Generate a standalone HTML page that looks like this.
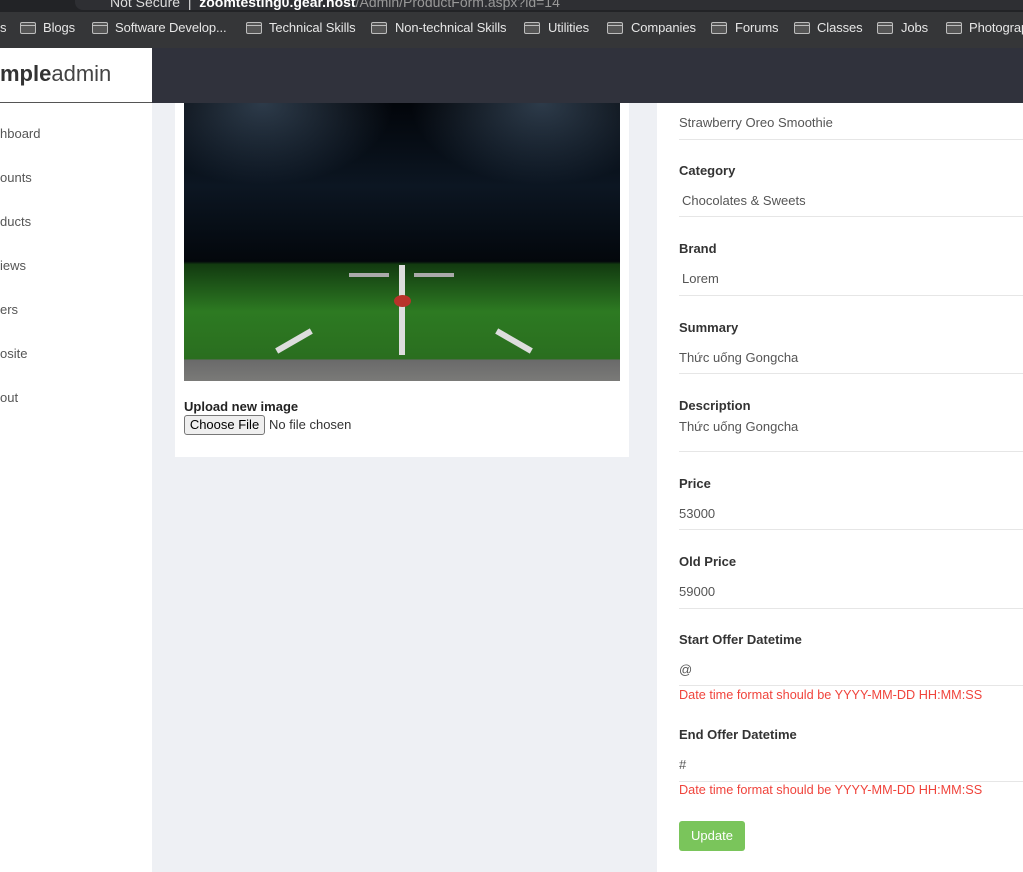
<!DOCTYPE html>
<html><head><meta charset="utf-8"><style>
*{margin:0;padding:0;box-sizing:border-box}
body{width:1023px;height:872px;overflow:hidden;position:relative;background:#eef0f4;font-family:"Liberation Sans",sans-serif}
.a{position:absolute;white-space:nowrap}
.bm{position:absolute;top:20px;font-size:13px;color:#e6e6e6;letter-spacing:-0.1px}
.fd{position:absolute;top:22px;width:16px;height:12px;border:1.5px solid #bdbdbd;border-radius:2px;background:#555}
.fd:after{content:"";position:absolute;left:-1px;right:-1px;top:2px;border-top:1.5px solid #bdbdbd}
.nav{position:absolute;left:0;font-size:13px;color:#555}
.lb{position:absolute;left:679px;font-size:13px;font-weight:bold;color:#333}
.v{position:absolute;left:679px;font-size:13px;color:#555}
.ln{position:absolute;left:679px;right:0;height:1px;background:#e6e6e6}
.er{position:absolute;left:679px;font-size:12.7px;color:#f0443c}
</style></head><body>
<div class="a" style="left:0;top:0;width:1023px;height:12px;background:#222326"></div>
<div class="a" style="left:75px;top:0;width:948px;height:10px;background:#2e2f33;border-radius:0 0 0 8px"></div>
<div class="a" style="left:110px;top:-6px;font-size:14px;color:#ddd">Not Secure &nbsp;|&nbsp; <b style="color:#fff">zoomtesting0.gear.host</b><span style="color:#999">/Admin/ProductForm.aspx?id=14</span></div>
<div class="a" style="left:0;top:12px;width:1023px;height:36px;background:#353638"></div>
<div class="bm" style="left:0">s</div>
<div class="fd" style="left:20px"></div><div class="bm" style="left:43px">Blogs</div>
<div class="fd" style="left:92px"></div><div class="bm" style="left:115px">Software Develop...</div>
<div class="fd" style="left:246px"></div><div class="bm" style="left:269px">Technical Skills</div>
<div class="fd" style="left:371px"></div><div class="bm" style="left:395px">Non-technical Skills</div>
<div class="fd" style="left:524px"></div><div class="bm" style="left:548px">Utilities</div>
<div class="fd" style="left:607px"></div><div class="bm" style="left:631px">Companies</div>
<div class="fd" style="left:711px"></div><div class="bm" style="left:735px">Forums</div>
<div class="fd" style="left:794px"></div><div class="bm" style="left:817px">Classes</div>
<div class="fd" style="left:877px"></div><div class="bm" style="left:901px">Jobs</div>
<div class="fd" style="left:946px"></div><div class="bm" style="left:969px">Photograp</div>
<div class="a" style="left:0;top:48px;width:1023px;height:55px;background:#30323c"></div>
<div class="a" style="left:0;top:48px;width:152px;height:55px;background:#fff;border-bottom:1px solid #555"></div>
<div class="a" style="left:0;top:61px;font-size:22px;color:#333"><b>mple</b><span style="font-weight:300;color:#444">admin</span></div>
<div class="a" style="left:0;top:103px;width:152px;height:769px;background:#fff"></div>
<div class="nav" style="top:126px">hboard</div>
<div class="nav" style="top:170px">ounts</div>
<div class="nav" style="top:214px">ducts</div>
<div class="nav" style="top:258px">iews</div>
<div class="nav" style="top:302px">ers</div>
<div class="nav" style="top:346px">osite</div>
<div class="nav" style="top:390px">out</div>
<div class="a" style="left:175px;top:103px;width:454px;height:354px;background:#fff"></div>
<div class="a" style="left:184px;top:103px;width:436px;height:278px;overflow:hidden;background:linear-gradient(#02050a 0%,#0c1622 30%,#03070c 57%,#123a10 58%,#2d7a22 75%,#2a6e1f 92%,#6a6a6a 92.5%,#7a7a78 100%)">
<div class="a" style="left:0;top:0;width:436px;height:150px;background:radial-gradient(ellipse 30% 55% at 18% 0%,rgba(110,140,170,.4),transparent),radial-gradient(ellipse 30% 55% at 82% 0%,rgba(110,140,170,.4),transparent)"></div>
<div class="a" style="left:215px;top:162px;width:6px;height:90px;background:#ddd"></div>
<div class="a" style="left:210px;top:192px;width:17px;height:12px;border-radius:50%;background:#b8332a"></div>
<div class="a" style="left:165px;top:170px;width:40px;height:4px;background:#aaa"></div>
<div class="a" style="left:230px;top:170px;width:40px;height:4px;background:#aaa"></div>
<div class="a" style="left:90px;top:235px;width:40px;height:6px;background:#ddd;transform:rotate(-30deg)"></div>
<div class="a" style="left:310px;top:235px;width:40px;height:6px;background:#ddd;transform:rotate(30deg)"></div>
</div>
<div class="a" style="left:184px;top:399px;font-size:13px;font-weight:bold;color:#222">Upload new image</div>
<div class="a" style="left:184px;top:415px;width:81px;height:20px;border:1px solid #777;border-radius:3px;background:#efefef;font-size:13px;text-align:center;line-height:18px;color:#000">Choose File</div>
<div class="a" style="left:269px;top:417px;font-size:13px;color:#333">No file chosen</div>
<div class="a" style="left:657px;top:103px;width:366px;height:769px;background:#fff"></div>
<div class="v" style="top:115px">Strawberry Oreo Smoothie</div><div class="ln" style="top:139px"></div>
<div class="lb" style="top:163px">Category</div>
<div class="v" style="top:193px;left:682px">Chocolates &amp; Sweets</div><div class="ln" style="top:216px"></div>
<div class="lb" style="top:241px">Brand</div>
<div class="v" style="top:271px;left:682px">Lorem</div><div class="ln" style="top:295px"></div>
<div class="lb" style="top:320px">Summary</div>
<div class="v" style="top:350px">Thức uống Gongcha</div><div class="ln" style="top:373px"></div>
<div class="lb" style="top:398px">Description</div>
<div class="v" style="top:419px">Thức uống Gongcha</div><div class="ln" style="top:451px"></div>
<div class="lb" style="top:476px">Price</div>
<div class="v" style="top:506px">53000</div><div class="ln" style="top:529px"></div>
<div class="lb" style="top:554px">Old Price</div>
<div class="v" style="top:584px">59000</div><div class="ln" style="top:608px"></div>
<div class="lb" style="top:632px">Start Offer Datetime</div>
<div class="v" style="top:662px">@</div><div class="ln" style="top:685px"></div>
<div class="er" style="top:688px">Date time format should be YYYY-MM-DD HH:MM:SS</div>
<div class="lb" style="top:727px">End Offer Datetime</div>
<div class="v" style="top:757px">#</div><div class="ln" style="top:781px"></div>
<div class="er" style="top:783px">Date time format should be YYYY-MM-DD HH:MM:SS</div>
<div class="a" style="left:679px;top:821px;width:66px;height:30px;background:#7ac55b;border-radius:3px;color:#fff;font-size:13px;text-align:center;line-height:30px">Update</div>
</body></html>
